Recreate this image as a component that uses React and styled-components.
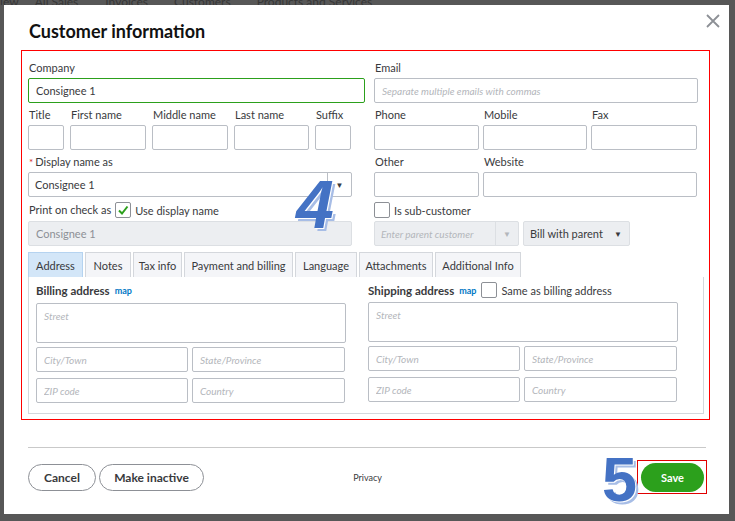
import styled, { createGlobalStyle } from "styled-components";

const GlobalStyle = createGlobalStyle`
  body {
    margin: 0;
    background: #575757;
    font-family: Lato, "Open Sans", sans-serif;
  }
`;

const Backdrop = styled.div`
  width: 735px;
  height: 521px;
  background: #575757;
  overflow: hidden;
`;

const BackNav = styled.div`
  height: 5px;
  display: flex;
  align-items: flex-end;
  overflow: hidden;
`;

const NavItem = styled.span`
  margin-left: ${(p) => p.$ml}px;
  margin-bottom: -3px;
  font-size: 12px;
  line-height: 12px;
  color: #363636;
  white-space: nowrap;
`;

const Modal = styled.div`
  position: relative;
  margin-left: 4px;
  width: 725px;
  height: 509px;
  background: #fff;
  display: flex;
  flex-direction: column;
  color: #393a3d;
`;

const Header = styled.div`
  height: 45px;
  display: flex;
  justify-content: space-between;
  align-items: flex-start;
  padding: 0 9px 0 25px;
  box-sizing: border-box;
`;

const Title = styled.h1`
  margin: 15px 0 0;
  font-size: 18px;
  line-height: 22px;
  font-weight: 700;
  color: #111;
`;

const Close = styled.svg`
  margin-top: 9px;
`;

const Highlight = styled.div`
  margin-left: 17px;
  width: 689px;
  height: 370px;
  box-sizing: border-box;
  border: 1px solid #ff0000;
  padding: 9px 11px 0 6px;
`;

const TopGrid = styled.div`
  display: grid;
  grid-template-columns: 337px 324px;
  column-gap: 9px;
`;

const Column = styled.div`
  display: flex;
  flex-direction: column;
  gap: 4px;
`;

const Row = styled.div`
  display: grid;
  grid-template-columns: ${(p) => p.$cols};
  column-gap: ${(p) => p.$gap ?? 4}px;
  width: ${(p) => (p.$w ? `${p.$w}px` : "auto")};
`;

const Field = styled.div`
  display: flex;
  flex-direction: column;
  gap: 2px;
`;

const Label = styled.div`
  height: 16px;
  line-height: 16px;
  font-size: 11px;
  padding-left: 1px;
  white-space: nowrap;
`;

const Required = styled.span`
  color: #d52b1e;
  margin-right: 2px;
  font-size: 10px;
`;

const TextInput = styled.input`
  box-sizing: border-box;
  width: ${(p) => (p.$w ? `${p.$w}px` : "100%")};
  height: 25px;
  border: 1px solid ${(p) => p.$accent || "#babec5"};
  border-radius: 2px;
  padding: 0 7px;
  font-family: Lato, sans-serif;
  font-size: 11px;
  color: ${(p) => (p.$muted ? "#8d9096" : "#393a3d")};
  background: ${(p) => (p.$muted ? "#eceef1" : "#fff")};
  outline: none;
  &::placeholder {
    font-style: italic;
    color: #b3b6bb;
    font-size: 10px;
  }
`;

const Street = styled.textarea`
  box-sizing: border-box;
  width: 100%;
  height: 40px;
  border: 1px solid #babec5;
  border-radius: 2px;
  padding: 6px 7px;
  resize: none;
  font-family: Lato, sans-serif;
  font-size: 10px;
  outline: none;
  &::placeholder {
    font-style: italic;
    color: #b3b6bb;
  }
`;

const Select = styled.div`
  box-sizing: border-box;
  height: 25px;
  width: ${(p) => p.$w}px;
  display: flex;
  align-items: stretch;
  border: 1px solid ${(p) => (p.$muted ? "#dcdfe3" : "#babec5")};
  border-radius: 2px;
  background: ${(p) => (p.$muted ? "#eceef1" : "#fff")};
  font-size: 11px;
`;

const SelectValue = styled.div`
  flex: 1;
  display: flex;
  align-items: center;
  padding-left: ${(p) => p.$pl ?? 6}px;
  white-space: nowrap;
  color: ${(p) => (p.$placeholder ? "#b3b6bb" : "#393a3d")};
  font-style: ${(p) => (p.$placeholder ? "italic" : "normal")};
  font-size: ${(p) => (p.$placeholder ? 10 : 11)}px;
`;

const SelectArrow = styled.div`
  width: ${(p) => p.$w}px;
  display: flex;
  align-items: center;
  justify-content: center;
  border-left: ${(p) => (p.$divider ? `1px solid ${p.$divider}` : "none")};
  font-size: 8px;
  color: ${(p) => p.$color || "#393a3d"};
`;

const CheckLine = styled.div`
  height: 18px;
  display: flex;
  align-items: center;
  gap: ${(p) => p.$gap ?? 4}px;
  font-size: 11px;
  white-space: nowrap;
`;

const Box = styled.span`
  box-sizing: border-box;
  width: 16px;
  height: 16px;
  border: 1px solid #8d9096;
  border-radius: 2px;
  background: #fff;
  display: inline-flex;
  align-items: center;
  justify-content: center;
`;

const Tabs = styled.div`
  margin-top: 6px;
  display: flex;
  gap: 2px;
`;

const Tab = styled.div`
  box-sizing: border-box;
  width: ${(p) => p.$w}px;
  height: 25px;
  border: 1px solid ${(p) => (p.$active ? "#b5d3f0" : "#d4d7dc")};
  border-bottom: none;
  background: ${(p) => (p.$active ? "#d3e6f8" : "#f4f5f8")};
  font-size: 11px;
  line-height: 26px;
  text-align: center;
  white-space: nowrap;
`;

const Panel = styled.div`
  box-sizing: border-box;
  width: 676px;
  height: 137px;
  border: 1px solid #d4d7dc;
  border-top: none;
  padding: 5px 0 0 7px;
  display: grid;
  grid-template-columns: 310px 310px;
  column-gap: 22px;
`;

const AddressCol = styled.div`
  display: flex;
  flex-direction: column;
`;

const AddressHead = styled.div`
  height: 16px;
  display: flex;
  align-items: center;
  gap: 5px;
  font-size: 11px;
  white-space: nowrap;
  margin-bottom: ${(p) => p.$mb}px;
`;

const Strong = styled.span`
  font-weight: 700;
  font-size: 11.5px;
`;

const MapLink = styled.span`
  color: #0077c5;
  font-size: 9px;
  font-weight: 700;
`;

const AddrRow = styled.div`
  margin-top: ${(p) => p.$mt}px;
  display: grid;
  grid-template-columns: 152px 153px;
  column-gap: 4px;
`;

const Divider = styled.div`
  margin: 27px 0 0 24px;
  width: 678px;
  height: 1px;
  background: #c9c9c9;
`;

const Footer = styled.div`
  margin-top: 12px;
  padding: 0 22px 0 24px;
  display: grid;
  grid-template-columns: 1fr auto 1fr;
  align-items: center;
`;

const Left = styled.div`
  display: flex;
  gap: 3px;
`;

const Pill = styled.button`
  box-sizing: border-box;
  height: 27px;
  width: ${(p) => p.$w}px;
  border: 1px solid #8d9096;
  border-radius: 14px;
  background: #fff;
  font-family: Lato, sans-serif;
  font-size: 12px;
  font-weight: 700;
  color: #393a3d;
  padding: 0;
`;

const Privacy = styled.span`
  font-size: 9px;
  color: #393a3d;
`;

const Right = styled.div`
  display: flex;
  justify-content: flex-end;
`;

const SaveFrame = styled.div`
  border: 1px solid #e00000;
  padding: 2px 2px 1px 3px;
  display: flex;
`;

const SaveButton = styled.button`
  width: 63px;
  height: 29px;
  border: none;
  border-radius: 15px;
  background: #2ca01c;
  color: #fff;
  font-family: Lato, sans-serif;
  font-size: 11px;
  font-weight: 700;
  padding: 0;
`;

const Marker = styled.span`
  position: absolute;
  left: ${(p) => p.$x}px;
  top: ${(p) => p.$y}px;
  font-family: "Liberation Sans", Arial, sans-serif;
  font-weight: 700;
  font-style: ${(p) => (p.$italic ? "italic" : "normal")};
  font-size: ${(p) => p.$size}px;
  line-height: 1;
  color: #4472c4;
  text-shadow: 1px 1px 0 #fff, 3px 3px 0 #a7bde6;
`;

const Check = () => (
  <svg width="12" height="12" viewBox="0 0 12 12">
    <polyline points="2,6.5 5,9.5 10.5,2.5" fill="none" stroke="#2ca01c" strokeWidth="2" />
  </svg>
);

const tabs = [
  ["Address", 55],
  ["Notes", 46],
  ["Tax info", 49],
  ["Payment and billing", 109],
  ["Language", 62],
  ["Attachments", 74],
  ["Additional Info", 86],
];

const Address = ({ title, extra }) => (
  <AddressCol>
    <AddressHead $mb={title === "Billing address" ? 5 : 4}>
      <Strong>{title}</Strong>
      <MapLink>map</MapLink>
      {extra}
    </AddressHead>
    <Street placeholder="Street" />
    <AddrRow $mt={4}>
      <TextInput placeholder="City/Town" />
      <TextInput placeholder="State/Province" />
    </AddrRow>
    <AddrRow $mt={6}>
      <TextInput placeholder="ZIP code" />
      <TextInput placeholder="Country" />
    </AddrRow>
  </AddressCol>
);

export default function App() {
  return (
    <Backdrop>
      <GlobalStyle />
      <BackNav>
        <NavItem $ml={-8}>View</NavItem>
        <NavItem $ml={16}>All Sales</NavItem>
        <NavItem $ml={27}>Invoices</NavItem>
        <NavItem $ml={26}>Customers</NavItem>
        <NavItem $ml={26}>Products and Services</NavItem>
      </BackNav>
      <Modal>
        <Header>
          <Title>Customer information</Title>
          <Close width="14" height="14" viewBox="0 0 14 14">
            <path d="M1 1 L13 13 M13 1 L1 13" stroke="#8d9096" strokeWidth="1.8" />
          </Close>
        </Header>

        <Highlight>
          <TopGrid>
            <Column>
              <Field>
                <Label>Company</Label>
                <TextInput $accent="#2ca01c" defaultValue="Consignee 1" readOnly />
              </Field>
              <Row $cols="36px 76px 76px 75px 36px" $gap={6} $w={324}>
                {["Title", "First name", "Middle name", "Last name", "Suffix"].map((l) => (
                  <Field key={l}>
                    <Label>{l}</Label>
                    <TextInput />
                  </Field>
                ))}
              </Row>
              <Field>
                <Label>
                  <Required>*</Required>Display name as
                </Label>
                <Select $w={324}>
                  <SelectValue>Consignee 1</SelectValue>
                  <SelectArrow $w={23} $divider="#babec5">▼</SelectArrow>
                </Select>
              </Field>
              <Field>
                <CheckLine $gap={4}>
                  <Label as="span">Print on check as</Label>
                  <Box>
                    <Check />
                  </Box>
                  <span>Use display name</span>
                </CheckLine>
                <TextInput
                  $w={324}
                  $muted
                  $accent="#dcdfe3"
                  defaultValue="Consignee 1"
                  readOnly
                />
              </Field>
            </Column>

            <Column>
              <Field>
                <Label>Email</Label>
                <TextInput placeholder="Separate multiple emails with commas" />
              </Field>
              <Row $cols="105px 104px 106px">
                {["Phone", "Mobile", "Fax"].map((l) => (
                  <Field key={l}>
                    <Label>{l}</Label>
                    <TextInput />
                  </Field>
                ))}
              </Row>
              <Row $cols="105px 214px">
                <Field>
                  <Label>Other</Label>
                  <TextInput />
                </Field>
                <Field>
                  <Label>Website</Label>
                  <TextInput />
                </Field>
              </Row>
              <Field>
                <CheckLine>
                  <Box />
                  <span>Is sub-customer</span>
                </CheckLine>
                <Row $cols="145px 107px">
                  <Select $w={145} $muted>
                    <SelectValue $placeholder>Enter parent customer</SelectValue>
                    <SelectArrow $w={22} $divider="#dcdfe3" $color="#b3b6bb">▼</SelectArrow>
                  </Select>
                  <Select $w={107} $muted>
                    <SelectValue $pl={6}>Bill with parent</SelectValue>
                    <SelectArrow $w={22}>▼</SelectArrow>
                  </Select>
                </Row>
              </Field>
            </Column>
          </TopGrid>

          <Tabs>
            {tabs.map(([t, w], i) => (
              <Tab key={t} $w={w} $active={i === 0}>
                {t}
              </Tab>
            ))}
          </Tabs>
          <Panel>
            <Address title="Billing address" />
            <Address
              title="Shipping address"
              extra={
                <CheckLine>
                  <Box />
                  <span>Same as billing address</span>
                </CheckLine>
              }
            />
          </Panel>
        </Highlight>

        <Divider />
        <Footer>
          <Left>
            <Pill $w={68}>Cancel</Pill>
            <Pill $w={105}>Make inactive</Pill>
          </Left>
          <Privacy>Privacy</Privacy>
          <Right>
            <SaveFrame>
              <SaveButton>Save</SaveButton>
            </SaveFrame>
          </Right>
        </Footer>

        <Marker $x={292} $y={165} $size={68} $italic>
          4
        </Marker>
        <Marker $x={598} $y={443} $size={63}>
          5
        </Marker>
      </Modal>
    </Backdrop>
  );
}
